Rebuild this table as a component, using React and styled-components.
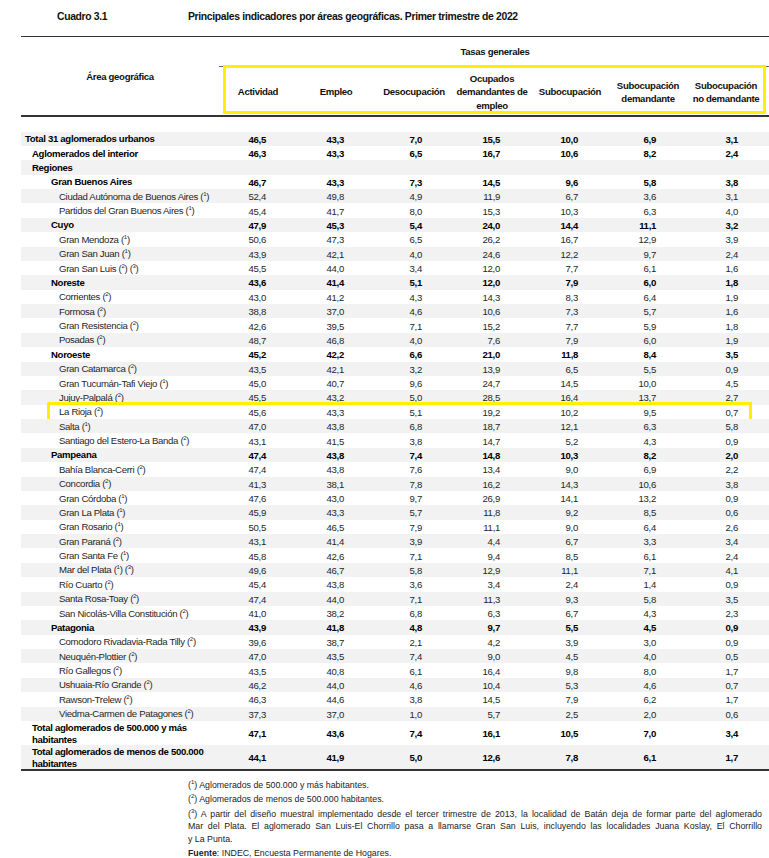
import React from "react"
import styled, { createGlobalStyle } from "styled-components"

const SANS = "'Liberation Sans', Arial, sans-serif"
const YELLOW = '#fff000'

const GlobalStyle = createGlobalStyle`
    html, body {
        margin: 0;
        padding: 0;
        background: #fff;
    }
    body {
        font-family: ${SANS};
        color: #222;
    }
`

const Page = styled.div`
    width: 769px;
    padding-top: 10px;
`

const TitleBar = styled.div`
    display: flex;
    padding-left: 57px;
    font-weight: bold;
    font-size: 10.4px;
    letter-spacing: -0.35px;
    line-height: 13px;
    color: #111;
`

const TitleNumber = styled.span`
    width: 131px;
`

const Table = styled.div`
    margin: 13px 0 0 21px;
    width: 748px;
    font-size: 9.6px;
    letter-spacing: -0.32px;
`

const Header = styled.div`
    display: grid;
    grid-template-columns: 198px 1fr;
    border-top: 1.5px solid #333;
    border-bottom: 2px solid #333;
    font-weight: bold;
    color: #111;
`

const AreaHead = styled.div`
    display: flex;
    align-items: center;
    justify-content: center;
`

const GroupHead = styled.div`
    display: flex;
    flex-direction: column;
`

const GroupTitle = styled.div`
    height: 29px;
    display: flex;
    align-items: center;
    justify-content: center;
    border-bottom: 1px solid #666;
    padding-left: 2px;
`

const SubHeads = styled.div`
    position: relative;
    height: 48px;
    display: grid;
    grid-template-columns: repeat(6, 78px) 82px;
    align-items: center;
    padding-top: 2px;
    box-sizing: border-box;
`

const SubHead = styled.div`
    display: flex;
    flex-direction: column;
    align-items: center;
    line-height: 13.5px;
    white-space: nowrap;
    padding-right: ${props => props.$last ? '4px' : '0'};
`

const Highlight = styled.div`
    position: absolute;
    top: ${props => props.$top};
    bottom: ${props => props.$bottom};
    left: ${props => props.$left};
    right: ${props => props.$right};
    border: 3px solid ${YELLOW};
    pointer-events: none;
`

const Body = styled.div`
    margin-top: 14.5px;
    border-bottom: 2px solid #333;
`

const Row = styled.div`
    position: relative;
    display: grid;
    grid-template-columns: 198px repeat(6, 78px) 82px;
    align-items: center;
    height: ${props => props.$tall ? '24px' : '14.375px'};
    padding-top: 1px;
    box-sizing: border-box;
    background: ${props => props.$shade ? '#f2f2f2' : '#fff'};
    font-weight: ${props => props.$bold ? 'bold' : 'normal'};
    color: ${props => props.$bold ? '#000' : '#262626'};
`

const Label = styled.div`
    padding-left: ${props => props.$indent}px;
    line-height: 12px;
    white-space: nowrap;
`

const Value = styled.div`
    text-align: right;
    padding-right: 31px;
`

const Sup = styled.sup`
    font-size: 6px;
    line-height: 0;
    vertical-align: 4px;
`

const Notes = styled.div`
    margin: 8px 0 0 188px;
    width: 574px;
    font-size: 8.8px;
    line-height: 12.5px;
    color: #222;
`

const Note = styled.p`
    margin: 0 0 2px;
`

const NoteLine = styled.span`
    display: block;
    white-space: nowrap;
    text-align: left;
    text-align-last: ${props => props.$fill ? 'justify' : 'left'};
`

const indents = [4, 11, 30, 38]

const rows = [
    ['Total 31 aglomerados urbanos', 0, true, null, '46,5 43,3 7,0 15,5 10,0 6,9 3,1'],
    ['Aglomerados del interior', 1, true, null, '46,3 43,3 6,5 16,7 10,6 8,2 2,4'],
    ['Regiones', 1, true, null, ''],
    ['Gran Buenos Aires', 2, true, null, '46,7 43,3 7,3 14,5 9,6 5,8 3,8'],
    ['Ciudad Autónoma de Buenos Aires', 3, false, [1], '52,4 49,8 4,9 11,9 6,7 3,6 3,1'],
    ['Partidos del Gran Buenos Aires', 3, false, [1], '45,4 41,7 8,0 15,3 10,3 6,3 4,0'],
    ['Cuyo', 2, true, null, '47,9 45,3 5,4 24,0 14,4 11,1 3,2'],
    ['Gran Mendoza', 3, false, [1], '50,6 47,3 6,5 26,2 16,7 12,9 3,9'],
    ['Gran San Juan', 3, false, [1], '43,9 42,1 4,0 24,6 12,2 9,7 2,4'],
    ['Gran San Luis', 3, false, [2, 3], '45,5 44,0 3,4 12,0 7,7 6,1 1,6'],
    ['Noreste', 2, true, null, '43,6 41,4 5,1 12,0 7,9 6,0 1,8'],
    ['Corrientes', 3, false, [2], '43,0 41,2 4,3 14,3 8,3 6,4 1,9'],
    ['Formosa', 3, false, [2], '38,8 37,0 4,6 10,6 7,3 5,7 1,6'],
    ['Gran Resistencia', 3, false, [2], '42,6 39,5 7,1 15,2 7,7 5,9 1,8'],
    ['Posadas', 3, false, [2], '48,7 46,8 4,0 7,6 7,9 6,0 1,9'],
    ['Noroeste', 2, true, null, '45,2 42,2 6,6 21,0 11,8 8,4 3,5'],
    ['Gran Catamarca', 3, false, [2], '43,5 42,1 3,2 13,9 6,5 5,5 0,9'],
    ['Gran Tucumán-Tafi Viejo', 3, false, [1], '45,0 40,7 9,6 24,7 14,5 10,0 4,5'],
    ['Jujuy-Palpalá', 3, false, [2], '45,5 43,2 5,0 28,5 16,4 13,7 2,7'],
    ['La Rioja', 3, false, [2], '45,6 43,3 5,1 19,2 10,2 9,5 0,7', true],
    ['Salta', 3, false, [1], '47,0 43,8 6,8 18,7 12,1 6,3 5,8'],
    ['Santiago del Estero-La Banda', 3, false, [2], '43,1 41,5 3,8 14,7 5,2 4,3 0,9'],
    ['Pampeana', 2, true, null, '47,4 43,8 7,4 14,8 10,3 8,2 2,0'],
    ['Bahía Blanca-Cerri', 3, false, [2], '47,4 43,8 7,6 13,4 9,0 6,9 2,2'],
    ['Concordia', 3, false, [2], '41,3 38,1 7,8 16,2 14,3 10,6 3,8'],
    ['Gran Córdoba', 3, false, [1], '47,6 43,0 9,7 26,9 14,1 13,2 0,9'],
    ['Gran La Plata', 3, false, [1], '45,9 43,3 5,7 11,8 9,2 8,5 0,6'],
    ['Gran Rosario', 3, false, [1], '50,5 46,5 7,9 11,1 9,0 6,4 2,6'],
    ['Gran Paraná', 3, false, [2], '43,1 41,4 3,9 4,4 6,7 3,3 3,4'],
    ['Gran Santa Fe', 3, false, [1], '45,8 42,6 7,1 9,4 8,5 6,1 2,4'],
    ['Mar del Plata', 3, false, [1, 3], '49,6 46,7 5,8 12,9 11,1 7,1 4,1'],
    ['Río Cuarto', 3, false, [2], '45,4 43,8 3,6 3,4 2,4 1,4 0,9'],
    ['Santa Rosa-Toay', 3, false, [2], '47,4 44,0 7,1 11,3 9,3 5,8 3,5'],
    ['San Nicolás-Villa Constitución', 3, false, [2], '41,0 38,2 6,8 6,3 6,7 4,3 2,3'],
    ['Patagonia', 2, true, null, '43,9 41,8 4,8 9,7 5,5 4,5 0,9'],
    ['Comodoro Rivadavia-Rada Tilly', 3, false, [2], '39,6 38,7 2,1 4,2 3,9 3,0 0,9'],
    ['Neuquén-Plottier', 3, false, [2], '47,0 43,5 7,4 9,0 4,5 4,0 0,5'],
    ['Río Gallegos', 3, false, [2], '43,5 40,8 6,1 16,4 9,8 8,0 1,7'],
    ['Ushuaia-Río Grande', 3, false, [2], '46,2 44,0 4,6 10,4 5,3 4,6 0,7'],
    ['Rawson-Trelew', 3, false, [2], '46,3 44,6 3,8 14,5 7,9 6,2 1,7'],
    ['Viedma-Carmen de Patagones', 3, false, [2], '37,3 37,0 1,0 5,7 2,5 2,0 0,6'],
    [['Total aglomerados de 500.000 y más', 'habitantes'], 1, true, null, '47,1 43,6 7,4 16,1 10,5 7,0 3,4'],
    [['Total aglomerados de menos de 500.000', 'habitantes'], 1, true, null, '44,1 41,9 5,0 12,6 7,8 6,1 1,7'],
]

const subHeads = [
    ['Actividad'],
    ['Empleo'],
    ['Desocupación'],
    ['Ocupados', 'demandantes de', 'empleo'],
    ['Subocupación'],
    ['Subocupación', 'demandante'],
    ['Subocupación', 'no demandante'],
]

const Refs = ({ refs }) => (
    <>
        {refs.map(n => <React.Fragment key={n}> (<Sup>{n}</Sup>)</React.Fragment>)}
    </>
)

const Lines = ({ lines }) => lines.map((l, i) => (
    <React.Fragment key={i}>{i > 0 && <br />}{l}</React.Fragment>
))

const DataRow = ({ row, index }) => {
    const [label, level, bold, refs, values, marked] = row
    const tall = Array.isArray(label)
    const cells = values ? values.split(' ') : Array(7).fill('')

    return (
        <Row $shade={index % 2 === 0} $bold={bold} $tall={tall}>
            <Label $indent={indents[level]}>
                {tall ? <Lines lines={label} /> : label}
                {refs && <Refs refs={refs} />}
            </Label>
            {cells.map((v, i) => <Value key={i}>{v}</Value>)}
            {marked && <Highlight $top="-3px" $bottom="-4px" $left="26px" $right="17px" />}
        </Row>
    )
}

const App = () => (
    <Page>
        <GlobalStyle />
        <TitleBar>
            <TitleNumber>Cuadro 3.1</TitleNumber>
            <span>Principales indicadores por áreas geográficas. Primer trimestre de 2022</span>
        </TitleBar>

        <Table>
            <Header>
                <AreaHead>Área geográfica</AreaHead>
                <GroupHead>
                    <GroupTitle>Tasas generales</GroupTitle>
                    <SubHeads>
                        {subHeads.map((h, i) => (
                            <SubHead key={i} $last={i === subHeads.length - 1}>
                                {h.map(l => <span key={l}>{l}</span>)}
                            </SubHead>
                        ))}
                        <Highlight $top="-2.5px" $bottom="1.5px" $left="4px" $right="3px" />
                    </SubHeads>
                </GroupHead>
            </Header>

            <Body>
                {rows.map((r, i) => <DataRow key={i} row={r} index={i} />)}
            </Body>
        </Table>

        <Notes>
            <Note>(<Sup>1</Sup>) Aglomerados de 500.000 y más habitantes.</Note>
            <Note>(<Sup>2</Sup>) Aglomerados de menos de 500.000 habitantes.</Note>
            <Note>
                <NoteLine $fill>(<Sup>3</Sup>) A partir del diseño muestral implementado desde el tercer trimestre de 2013, la localidad de Batán deja de formar parte del aglomerado</NoteLine>
                <NoteLine $fill>Mar del Plata. El aglomerado San Luis-El Chorrillo pasa a llamarse Gran San Luis, incluyendo las localidades Juana Koslay, El Chorrillo</NoteLine>
                <NoteLine>y La Punta.</NoteLine>
            </Note>
            <Note><b>Fuente</b>: INDEC, Encuesta Permanente de Hogares.</Note>
        </Notes>
    </Page>
)

export default App
